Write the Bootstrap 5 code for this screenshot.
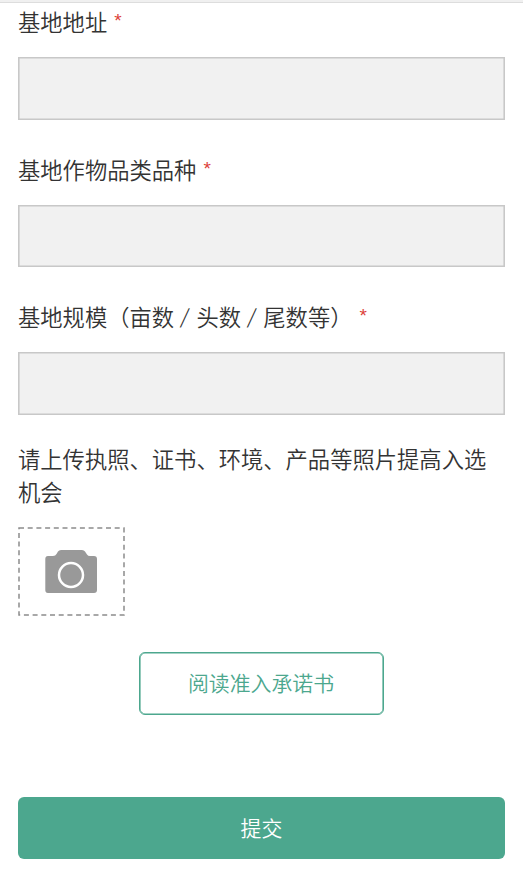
<!DOCTYPE html>
<html lang="zh-CN">
<head>
<meta charset="utf-8">
<meta name="viewport" content="width=device-width, initial-scale=1">
<title>基地信息</title>
<link href="https://cdn.jsdelivr.net/npm/bootstrap@5.3.0/dist/css/bootstrap.min.css" rel="stylesheet">
<style>
body { font-family: "Noto Sans CJK SC", sans-serif; font-size: 22.3px; font-weight: 350; line-height: 33px; color: #333; background: #fff; }
.top-strip { height: 3px; background: #f0f0f0; border-bottom: 1px solid #ddd; }
.apply-form { padding: 0 18px 17px; }
.field { height: 147.6px; padding-top: 2px; }
.field .form-label { height: 33px; margin-bottom: 19px; font-size: inherit; white-space: pre; }
.req { display: inline-block; color: #dc3f3a; font-size: 19px; line-height: 1; margin-left: 7px; vertical-align: 4px; font-family: "Liberation Sans", sans-serif; }
.slash { display: inline-block; width: 22.3px; font-size: 20px; line-height: 1; text-align: center; vertical-align: 2px; transform: skewX(-8deg); }
.field .form-control { height: 62.5px; background: #f1f1f1; border: 1px solid #c8c8c8; box-shadow: inset 0 0 0 .6px #c8c8c8; }
.upload-note { margin: -4px 0 19px; }
.upload-box { width: 107px; height: 89px; }
.btn-read { width: 245px; height: 63px; margin-top: 36px; font-size: 20.9px; font-weight: 350; border: 1px solid #4ca78e; box-shadow: inset 0 0 0 .6px #4ca78e; color: #4ca78e; border-radius: 6px; padding: 0 1px 2px 0; }
.btn-send { height: 62px; margin-top: 82px; font-size: 20.9px; font-weight: 350; background: #4ca78e; color: #fff; border-radius: 6px; }
</style>
</head>
<body>
<div class="top-strip"></div>
<form class="apply-form d-flex flex-column">
  <div class="field"><label class="form-label d-block" for="addr">基地地址<span class="req">*</span></label><input id="addr" class="form-control rounded-0" type="text"></div>
  <div class="field"><label class="form-label d-block" for="kind">基地作物品类品种<span class="req">*</span></label><input id="kind" class="form-control rounded-0" type="text"></div>
  <div class="field"><label class="form-label d-block" for="scale">基地规模（亩数<span class="slash">/</span>头数<span class="slash">/</span>尾数等）<span class="req">*</span></label><input id="scale" class="form-control rounded-0" type="text"></div>
  <p class="upload-note">请上传执照、证书、环境、产品等照片提高入选机会</p>
  <svg class="upload-box d-block" viewBox="0 0 107 89" role="img" aria-label="上传照片">
    <rect x="1" y="1" width="105" height="87" fill="none" stroke="#8c8c8c" stroke-width="1.5" stroke-dasharray="5 3.7"/>
    <path fill="#999" d="M30 29H35Q37.500 29 38.500 27L40 24.500Q41 23 43 23H64Q66 23 67 24.500L69 27.500Q70 29 72 29H76Q79 29 79 32V63Q79 66 76 66H30Q27.300 66 27.300 63V32Q27.300 29 30 29Z"/>
    <circle cx="53" cy="48" r="12" fill="none" stroke="#fff" stroke-width="2.500"/>
  </svg>
  <button type="button" class="btn btn-read align-self-center">阅读准入承诺书</button>
  <button type="submit" class="btn btn-send w-100 p-0 border-0">提交</button>
</form>
<script src="https://cdn.jsdelivr.net/npm/bootstrap@5.3.0/dist/js/bootstrap.bundle.min.js"></script>
</body>
</html>
